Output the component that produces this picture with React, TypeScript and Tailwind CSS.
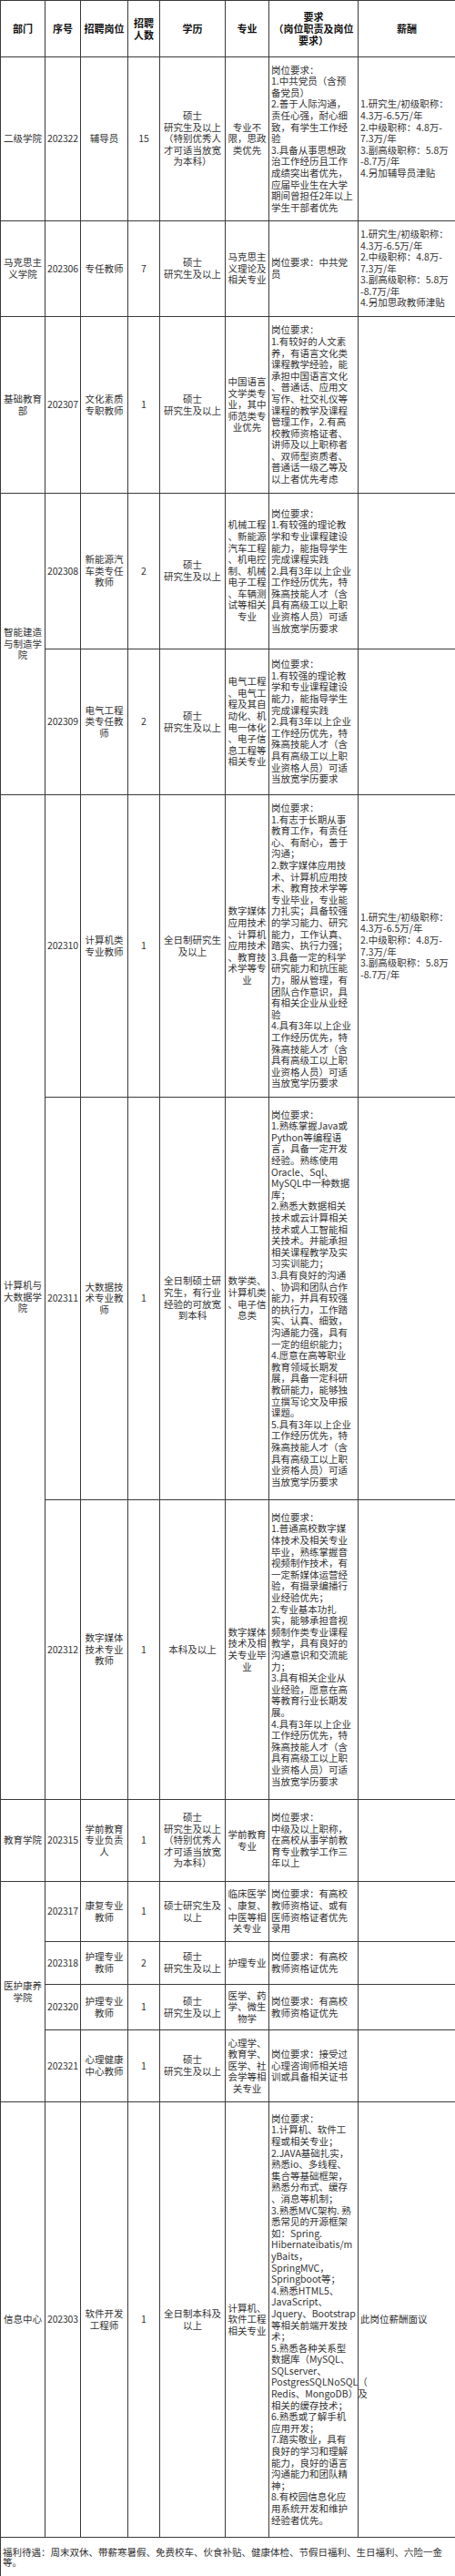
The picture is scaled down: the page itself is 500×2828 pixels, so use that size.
import React from "react";

type Row = {
  dept?: { text: string; span: number };
  no: string;
  pos: string;
  num: string;
  edu: string;
  major: string;
  req: string;
  pay: string;
  h: number;
};

const PAY_BASE = "1.研究生/初级职称：\n4.3万-6.5万/年\n2.中级职称：4.8万-\n7.3万/年\n3.副高级职称：5.8万\n-8.7万/年";

const REQ_ENGINEER =
  "岗位要求：\n1.有较强的理论教\n学和专业课程建设\n能力，能指导学生\n完成课程实践\n2.具有3年以上企业\n工作经历优先，特\n殊高技能人才（含\n具有高级工以上职\n业资格人员）可适\n当放宽学历要求";

const rows: Row[] = [
  {
    dept: { text: "二级学院", span: 1 },
    no: "202322",
    pos: "辅导员",
    num: "15",
    edu: "硕士\n研究生及以上\n（特别优秀人\n才可适当放宽\n为本科）",
    major: "专业不\n限，思政\n类优先",
    req: "岗位要求：\n1.中共党员（含预\n备党员）\n2.善于人际沟通，\n责任心强，耐心细\n致，有学生工作经\n验\n3.具备从事思想政\n治工作经历且工作\n成绩突出者优先，\n应届毕业生在大学\n期间曾担任2年以上\n学生干部者优先",
    pay: PAY_BASE + "\n4.另加辅导员津贴",
    h: 180,
  },
  {
    dept: { text: "马克思主\n义学院", span: 1 },
    no: "202306",
    pos: "专任教师",
    num: "7",
    edu: "硕士\n研究生及以上",
    major: "马克思主\n义理论及\n相关专业",
    req: "岗位要求：中共党\n员",
    pay: PAY_BASE + "\n4.另加思政教师津贴",
    h: 105,
  },
  {
    dept: { text: "基础教育\n部", span: 1 },
    no: "202307",
    pos: "文化素质\n专职教师",
    num: "1",
    edu: "硕士\n研究生及以上",
    major: "中国语言\n文学类专\n业，其中\n师范类专\n业优先",
    req: "岗位要求：\n1.有较好的人文素\n养，有语言文化类\n课程教学经验，能\n承担中国语言文化\n、普通话、应用文\n写作、社交礼仪等\n课程的教学及课程\n管理工作，2.有高\n校教师资格证者、\n讲师及以上职称者\n、双师型资质者、\n普通话一级乙等及\n以上者优先考虑",
    pay: "",
    h: 194,
  },
  {
    dept: { text: "智能建造\n与制造学\n院", span: 2 },
    no: "202308",
    pos: "新能源汽\n车类专任\n教师",
    num: "2",
    edu: "硕士\n研究生及以上",
    major: "机械工程\n、新能源\n汽车工程\n、机电控\n制、机械\n电子工程\n、车辆测\n试等相关\n专业",
    req: REQ_ENGINEER,
    pay: "",
    h: 171,
  },
  {
    no: "202309",
    pos: "电气工程\n类专任教\n师",
    num: "2",
    edu: "硕士\n研究生及以上",
    major: "电气工程\n、电气工\n程及其自\n动化、机\n电一体化\n、电子信\n息工程等\n相关专业",
    req: REQ_ENGINEER,
    pay: "",
    h: 160,
  },
  {
    dept: { text: "计算机与\n大数据学\n院", span: 3 },
    no: "202310",
    pos: "计算机类\n专业教师",
    num: "1",
    edu: "全日制研究生\n及以上",
    major: "数字媒体\n应用技术\n、计算机\n应用技术\n、教育技\n术学等专\n业",
    req: "岗位要求：\n1.有志于长期从事\n教育工作，有责任\n心、有耐心，善于\n沟通；\n2.数字媒体应用技\n术、计算机应用技\n术、教育技术学等\n专业毕业，专业能\n力扎实；具备较强\n的学习能力、研究\n能力，工作认真、\n踏实、执行力强；\n3.具备一定的科学\n研究能力和抗压能\n力，服从管理，有\n团队合作意识，具\n有相关企业从业经\n验\n4.具有3年以上企业\n工作经历优先，特\n殊高技能人才（含\n具有高级工以上职\n业资格人员）可适\n当放宽学历要求",
    pay: PAY_BASE,
    h: 332,
  },
  {
    no: "202311",
    pos: "大数据技\n术专业教\n师",
    num: "1",
    edu: "全日制硕士研\n究生，有行业\n经验的可放宽\n到本科",
    major: "数学类、\n计算机类\n、电子信\n息类",
    req: "岗位要求：\n1.熟练掌握Java或\nPython等编程语\n言，具备一定开发\n经验。熟练使用\nOracle、Sql、\nMySQL中一种数据\n库；\n2.熟悉大数据相关\n技术或云计算相关\n技术或人工智能相\n关技术。并能承担\n相关课程教学及实\n习实训能力；\n3.具有良好的沟通\n、协调和团队合作\n能力，并具有较强\n的执行力，工作踏\n实、认真、细致，\n沟通能力强，具有\n一定的组织能力；\n4.愿意在高等职业\n教育领域长期发\n展，具备一定科研\n教研能力，能够独\n立撰写论文及申报\n课题。\n5.具有3年以上企业\n工作经历优先，特\n殊高技能人才（含\n具有高级工以上职\n业资格人员）可适\n当放宽学历要求",
    pay: "",
    h: 442,
  },
  {
    no: "202312",
    pos: "数字媒体\n技术专业\n教师",
    num: "1",
    edu: "本科及以上",
    major: "数字媒体\n技术及相\n关专业毕\n业",
    req: "岗位要求：\n1.普通高校数字媒\n体技术及相关专业\n毕业，熟练掌握音\n视频制作技术，有\n一定新媒体运营经\n验，有摄录编播行\n业经验优先；\n2.专业基本功扎\n实，能够承担音视\n频制作类专业课程\n教学，具有良好的\n沟通意识和交流能\n力；\n3.具有相关企业从\n业经验，愿意在高\n等教育行业长期发\n展。\n4.具有3年以上企业\n工作经历优先，特\n殊高技能人才（含\n具有高级工以上职\n业资格人员）可适\n当放宽学历要求",
    pay: "",
    h: 329,
  },
  {
    dept: { text: "教育学院", span: 1 },
    no: "202315",
    pos: "学前教育\n专业负责\n人",
    num: "1",
    edu: "硕士\n研究生及以上\n（特别优秀人\n才可适当放宽\n为本科）",
    major: "学前教育\n专业",
    req: "岗位要求：\n中级及以上职称，\n在高校从事学前教\n育专业教学工作三\n年以上",
    pay: "",
    h: 90,
  },
  {
    dept: { text: "医护康养\n学院", span: 4 },
    no: "202317",
    pos: "康复专业\n教师",
    num: "1",
    edu: "硕士研究生及\n以上",
    major: "临床医学\n、康复、\n中医等相\n关专业",
    req: "岗位要求：有高校\n教师资格证、或有\n医师资格证者优先\n录用",
    pay: "",
    h: 66,
  },
  {
    no: "202318",
    pos: "护理专业\n教师",
    num: "2",
    edu: "硕士\n研究生及以上",
    major: "护理专业",
    req: "岗位要求：有高校\n教师资格证优先",
    pay: "",
    h: 47,
  },
  {
    no: "202320",
    pos: "护理专业\n教师",
    num: "1",
    edu: "硕士\n研究生及以上",
    major: "医学、药\n学、微生\n物学",
    req: "岗位要求：有高校\n教师资格证优先",
    pay: "",
    h: 50,
  },
  {
    no: "202321",
    pos: "心理健康\n中心教师",
    num: "1",
    edu: "硕士\n研究生及以上",
    major: "心理学、\n教育学、\n医学、社\n会学等相\n关专业",
    req: "岗位要求：接受过\n心理咨询师相关培\n训或具备相关证书",
    pay: "",
    h: 79,
  },
  {
    dept: { text: "信息中心", span: 1 },
    no: "202303",
    pos: "软件开发\n工程师",
    num: "1",
    edu: "全日制本科及\n以上",
    major: "计算机、\n软件工程\n相关专业",
    req: "岗位要求：\n1.计算机、软件工\n程或相关专业；\n2.JAVA基础扎实，\n熟悉io、多线程、\n集合等基础框架，\n熟悉分布式、缓存\n、消息等机制；\n3.熟悉MVC架构. 熟\n悉常见的开源框架\n如：Spring.\nHibernateibatis/m\nyBaits，\nSpringMVC，\nSpringboot等；\n4.熟悉HTML5、\nJavaScript、\nJquery、Bootstrap\n等相关前端开发技\n术；\n5.熟悉各种关系型\n数据库（MySQL、\nSQLserver、\nPostgresSQLNoSQL（\nRedis、MongoDB）及\n相关的缓存技术；\n6.熟悉或了解手机\n应用开发；\n7.踏实敬业，具有\n良好的学习和理解\n能力，良好的语言\n沟通能力和团队精\n神；\n8.有校园信息化应\n用系统开发和维护\n经验者优先。",
    pay: "此岗位薪酬面议",
    h: 478,
  },
];

const cell = "border border-[#3a3a3a] p-0 align-middle whitespace-pre";
const center = cell + " text-center";
const left = cell + " text-left pl-[2px]";

export default function App() {
  return (
    <div className="w-[500px] bg-white text-[#333] font-['Noto_Sans_CJK_SC','Noto_Sans',sans-serif] text-[10.5px] leading-[12.6px]">
      <table className="w-[500px] table-fixed border-collapse">
        <colgroup>
          <col className="w-[49px]" />
          <col className="w-[39px]" />
          <col className="w-[52px]" />
          <col className="w-[35px]" />
          <col className="w-[72px]" />
          <col className="w-[48px]" />
          <col className="w-[98px]" />
          <col className="w-[107px]" />
        </colgroup>
        <thead>
          <tr className="h-[62px] font-bold text-[11px] leading-[13px] text-[#111]">
            <th className={center}>部门</th>
            <th className={center}>序号</th>
            <th className={center}>招聘岗位</th>
            <th className={center}>{"招聘\n人数"}</th>
            <th className={center}>学历</th>
            <th className={center}>专业</th>
            <th className={center}>{"要求\n（岗位职责及岗位\n要求）"}</th>
            <th className={center}>薪酬</th>
          </tr>
        </thead>
        <tbody>
          {rows.map((r) => (
            <tr key={r.no} style={{ height: r.h }}>
              {r.dept && (
                <td rowSpan={r.dept.span} className={center}>
                  {r.dept.text}
                </td>
              )}
              <td className={center + " tracking-[-0.2px]"}>{r.no}</td>
              <td className={center}>{r.pos}</td>
              <td className={center}>{r.num}</td>
              <td className={center}>{r.edu}</td>
              <td className={center}>{r.major}</td>
              <td className={left}>{r.req}</td>
              <td className={left}>{r.pay}</td>
            </tr>
          ))}
          <tr className="h-[43px]">
            <td colSpan={8} className={left + " leading-[11.5px]"}>
              {"福利待遇：周末双休、带薪寒暑假、免费校车、伙食补贴、健康体检、节假日福利、生日福利、六险一金\n等。"}
            </td>
          </tr>
        </tbody>
      </table>
    </div>
  );
}
